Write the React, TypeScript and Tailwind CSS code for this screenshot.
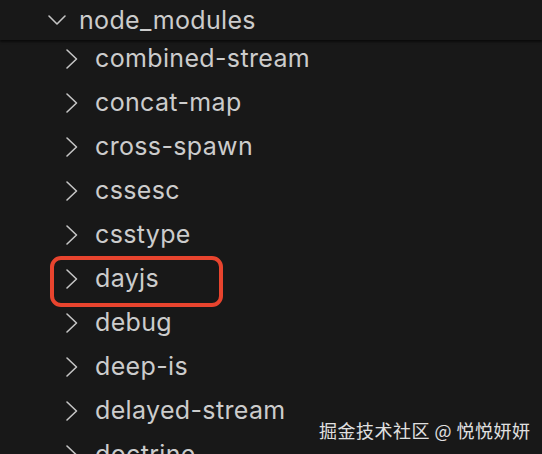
import React from "react";

const items = [
  "combined-stream",
  "concat-map",
  "cross-spawn",
  "cssesc",
  "csstype",
  "dayjs",
  "debug",
  "deep-is",
  "delayed-stream",
  "doctrine",
];

function ChevronRight() {
  return (
    <svg width="14" height="22" viewBox="0 0 14 22" fill="none">
      <path d="M2 2 L11.5 11 L2 20" stroke="#c5c5c5" strokeWidth="1.6" strokeLinecap="round" strokeLinejoin="round" />
    </svg>
  );
}

function ChevronDown() {
  return (
    <svg width="20" height="14" viewBox="0 0 20 14" fill="none">
      <path d="M2 3 L10 11 L18 3" stroke="#c5c5c5" strokeWidth="1.6" strokeLinecap="round" strokeLinejoin="round" />
    </svg>
  );
}

export default function App() {
  return (
    <div
      className="relative w-[542px] h-[454px] overflow-hidden bg-[#181818] text-[#cccccc]"
      style={{ fontFamily: "Inter, 'Noto Sans', sans-serif" }}
    >
      <div className="relative z-10 h-[40px] flex items-center bg-[#181818] shadow-[0_2px_2px_rgba(0,0,0,0.55)]">
        <div className="w-[47px]" />
        <ChevronDown />
        <span className="ml-[12px] text-[25px] leading-none tracking-[0.35px]">node_modules</span>
      </div>
      <div className="mt-[-3px] flex flex-col">
        {items.map((name) => (
          <div key={name} className="h-[44px] flex items-center">
            <div className="w-[65px]" />
            <ChevronRight />
            <span className="ml-[16px] text-[25px] leading-none tracking-[0.35px] pb-[2px]">{name}</span>
          </div>
        ))}
      </div>
      <div className="absolute left-[50px] top-[256px] w-[173px] h-[51px] rounded-[11px] border-[4px] border-[#e8442e]" />
      <div
        className="absolute left-[319px] top-[418px] text-[18px] leading-[24px] tracking-[0.5px] text-[#e0e0e0]"
        style={{ fontFamily: "'Noto Sans CJK SC', 'Noto Sans', sans-serif" }}
      >
        掘金技术社区 @ 悦悦妍妍
      </div>
    </div>
  );
}
